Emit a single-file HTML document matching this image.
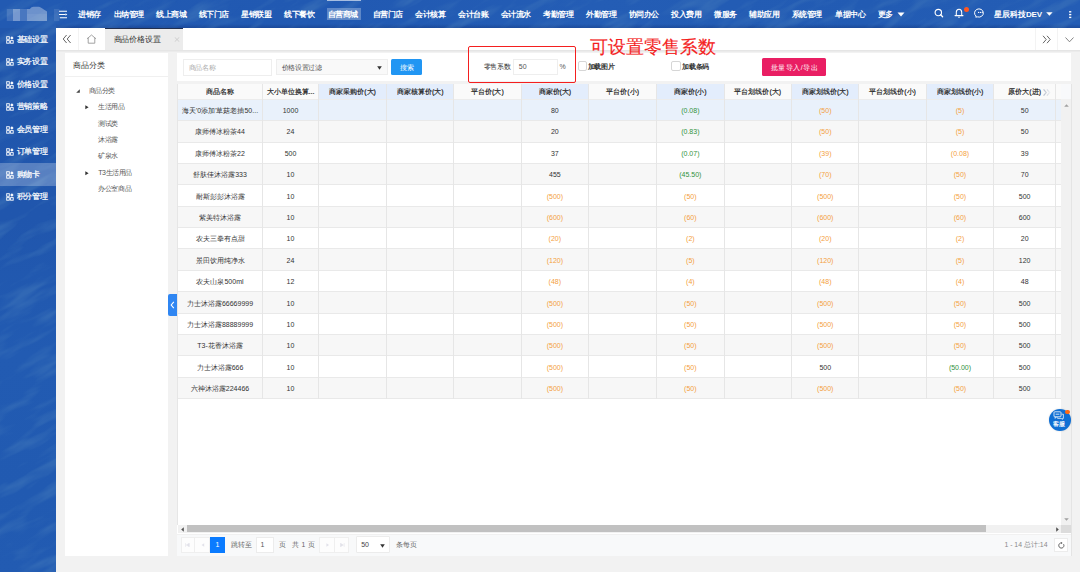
<!DOCTYPE html><html><head><meta charset="utf-8"><style>
*{margin:0;padding:0;box-sizing:border-box}
html,body{width:1080px;height:572px;overflow:hidden;background:#f2f2f2;font-family:"Liberation Sans",sans-serif;position:relative}
.a{position:absolute;white-space:nowrap}
.nav{color:#fff;font-size:8px;font-weight:bold;top:9.6px;letter-spacing:-0.5px;line-height:10px}
.side{color:#fff;font-size:8px;left:16.6px;letter-spacing:-0.25px;line-height:10px;-webkit-text-stroke:0.2px #fff}
.th{font-size:7px;font-weight:normal;color:#222;-webkit-text-stroke:0.18px #222;text-align:center;top:86.7px;line-height:10px}
.td{font-size:7px;color:#333;text-align:center;line-height:10px}
.g{color:#32923c}.o{color:#f4a040}.d{color:#333}
.tree{font-size:7px;letter-spacing:-0.4px;color:#555;line-height:10px}
</style></head><body>

<div class="a" style="left:0;top:0;width:1080px;height:28px;background:linear-gradient(100deg,#225ab2 0%,#2159b2 30%,#245db5 55%,#225bb3 80%,#245db5 100%)"></div>
<div class="a" style="left:0;top:28px;width:56px;height:544px;background:linear-gradient(180deg,#2157ad,#2056ad 35%,#225bb2 60%,#215ab1 85%,#225bb2)"></div>
<div class="a" style="left:56px;top:24px;width:1024px;height:4px;background:linear-gradient(rgba(10,30,90,0),rgba(10,30,90,.28))"></div>
<svg class="a" style="left:0;top:0" width="1080" height="572"><defs><filter id="tx" x="-50%" y="-50%" width="200%" height="200%"><feTurbulence type="fractalNoise" baseFrequency="0.02 0.09" numOctaves="3" seed="11" result="n"/><feColorMatrix in="n" type="matrix" values="0 0 0 0 0.06  0 0 0 0 0.2  0 0 0 0 0.5  0 0 0 -3 1.6"/></filter><clipPath id="bc"><rect x="0" y="0" width="1080" height="28"/><rect x="0" y="28" width="56" height="544"/></clipPath></defs><g clip-path="url(#bc)"><rect x="-400" y="-400" width="1900" height="1400" filter="url(#tx)" opacity=".45" transform="rotate(-28 540 286)"/></g></svg>
<svg class="a" style="left:0;top:0" width="62" height="28" viewBox="0 0 62 28"><rect x="6.8" y="9" width="6.2" height="12" fill="#fff" fill-opacity=".14"/><rect x="13" y="9" width="7" height="12" fill="#fff" fill-opacity=".38"/><rect x="20" y="9" width="7" height="12" fill="#fff" fill-opacity=".18"/><path d="M27 9H29.8Q31.5 6.8 33.5 6.8H39Q41 7.5 47 11.5V21H27z" fill="#fff" fill-opacity=".34"/><rect x="27" y="14" width="20" height="7" fill="#fff" fill-opacity=".06"/><rect x="54" y="9" width="5.3" height="12" fill="#fff" fill-opacity=".1"/></svg>
<svg class="a" style="left:58px;top:10px" width="10" height="9" viewBox="0 0 10 9"><path d="M1 1.3H9M1 4.5H7.5M1.8 7.7H9" stroke="#fff" stroke-width="1.1"/><path d="M7.5 3.2L9.3 4.5 7.5 5.8z" fill="#fff"/></svg>
<div class="a" style="left:327.3px;top:8.1px;width:33.8px;height:11.8px;background:rgba(255,255,255,.28)"></div>
<div class="a" style="left:327.3px;top:0;width:33.8px;height:1px;background:rgba(255,255,255,.6)"></div>
<div class="a nav" style="left:78.4px">进销存</div>
<div class="a nav" style="left:113.7px">出纳管理</div>
<div class="a nav" style="left:156.39999999999998px">线上商城</div>
<div class="a nav" style="left:198.7px">线下门店</div>
<div class="a nav" style="left:241.39999999999998px">星销联盟</div>
<div class="a nav" style="left:284.4px">线下餐饮</div>
<div class="a nav" style="left:327.7px">自营商城</div>
<div class="a nav" style="left:372.7px">自营门店</div>
<div class="a nav" style="left:415.2px">会计核算</div>
<div class="a nav" style="left:458.0px">会计台账</div>
<div class="a nav" style="left:500.5px">会计流水</div>
<div class="a nav" style="left:543.0px">考勤管理</div>
<div class="a nav" style="left:586.0px">外勤管理</div>
<div class="a nav" style="left:628.9000000000001px">协同办公</div>
<div class="a nav" style="left:671.4000000000001px">投入费用</div>
<div class="a nav" style="left:714.4000000000001px">微服务</div>
<div class="a nav" style="left:749.4000000000001px">辅助应用</div>
<div class="a nav" style="left:791.9000000000001px">系统管理</div>
<div class="a nav" style="left:835.0px">单据中心</div>
<div class="a nav" style="left:877.5px">更多</div>
<svg class="a" style="left:897px;top:12px" width="8" height="5"><path d="M0.5 0.5H7.5L4 4.5z" fill="#fff"/></svg>
<svg class="a" style="left:933px;top:8px" width="11" height="10" viewBox="0 0 11 10"><circle cx="5.3" cy="4.5" r="3.2" stroke="#fff" stroke-width="1.15" fill="none"/><path d="M7.6 6.8L9.6 8.8" stroke="#fff" stroke-width="1.3" stroke-linecap="round"/></svg>
<svg class="a" style="left:954px;top:8px" width="10" height="10" viewBox="0 0 10 10"><path d="M2.3 7.2V4.3A2.7 3.1 0 0 1 7.7 4.3V7.2" stroke="#fff" stroke-width="1.05" fill="none"/><path d="M1 7.6H9" stroke="#fff" stroke-width="1.05" stroke-linecap="round"/><path d="M4.2 9.2H5.8" stroke="#fff" stroke-width="1"/></svg>
<div class="a" style="left:963.7px;top:6.9px;width:5.2px;height:5.2px;border-radius:50%;background:#ff5722"></div>
<svg class="a" style="left:973.5px;top:7px" width="12" height="11" viewBox="0 0 12 11"><path d="M2.2 9.2A4.4 4.1 0 1 1 3.6 9.9L1.6 10.1z" stroke="#fff" stroke-width="1" fill="none" stroke-linejoin="round"/><circle cx="4.6" cy="5.4" r=".65" fill="#fff"/><circle cx="6.4" cy="5.4" r=".65" fill="#fff"/><circle cx="8.2" cy="5.4" r=".65" fill="#fff"/></svg>
<div class="a nav" style="left:994.3px;letter-spacing:-0.1px">星辰科技DEV</div>
<svg class="a" style="left:1045.7px;top:11.8px" width="7" height="4"><path d="M0.2 0.2H6.6L3.4 3.8z" fill="#fff"/></svg>
<svg class="a" style="left:1068.8px;top:11px" width="3" height="8"><rect x=".1" y=".1" width="2.2" height="1.4" fill="#fff"/><rect x=".1" y="2.9" width="2.2" height="1.4" fill="#fff"/><rect x=".1" y="5.7" width="2.2" height="1.4" fill="#fff"/></svg>
<div class="a" style="left:0;top:163px;width:56px;height:22.5px;background:rgba(255,255,255,.25)"></div>
<svg class="a" style="left:5.5px;top:35.65px" width="8" height="8" viewBox="0 0 8 8"><rect x=".7" y=".7" width="2.6" height="2.6" fill="none" stroke="#fff" stroke-width=".9"/><rect x=".7" y="4.6" width="2.6" height="2.6" fill="none" stroke="#fff" stroke-width=".9"/><rect x="4.6" y="4.6" width="2.6" height="2.6" fill="none" stroke="#fff" stroke-width=".9"/><path d="M5.9 .3L7.6 2 5.9 3.7 4.2 2z" fill="#fff"/></svg>
<div class="a side" style="top:34.75px">基础设置</div>
<svg class="a" style="left:5.5px;top:58.15px" width="8" height="8" viewBox="0 0 8 8"><rect x=".7" y=".7" width="2.6" height="2.6" fill="none" stroke="#fff" stroke-width=".9"/><rect x=".7" y="4.6" width="2.6" height="2.6" fill="none" stroke="#fff" stroke-width=".9"/><rect x="4.6" y="4.6" width="2.6" height="2.6" fill="none" stroke="#fff" stroke-width=".9"/><path d="M5.9 .3L7.6 2 5.9 3.7 4.2 2z" fill="#fff"/></svg>
<div class="a side" style="top:57.25px">实务设置</div>
<svg class="a" style="left:5.5px;top:80.65px" width="8" height="8" viewBox="0 0 8 8"><rect x=".7" y=".7" width="2.6" height="2.6" fill="none" stroke="#fff" stroke-width=".9"/><rect x=".7" y="4.6" width="2.6" height="2.6" fill="none" stroke="#fff" stroke-width=".9"/><rect x="4.6" y="4.6" width="2.6" height="2.6" fill="none" stroke="#fff" stroke-width=".9"/><path d="M5.9 .3L7.6 2 5.9 3.7 4.2 2z" fill="#fff"/></svg>
<div class="a side" style="top:79.75px">价格设置</div>
<svg class="a" style="left:5.5px;top:103.15px" width="8" height="8" viewBox="0 0 8 8"><rect x=".7" y=".7" width="2.6" height="2.6" fill="none" stroke="#fff" stroke-width=".9"/><rect x=".7" y="4.6" width="2.6" height="2.6" fill="none" stroke="#fff" stroke-width=".9"/><rect x="4.6" y="4.6" width="2.6" height="2.6" fill="none" stroke="#fff" stroke-width=".9"/><path d="M5.9 .3L7.6 2 5.9 3.7 4.2 2z" fill="#fff"/></svg>
<div class="a side" style="top:102.25px">营销策略</div>
<svg class="a" style="left:5.5px;top:125.65px" width="8" height="8" viewBox="0 0 8 8"><rect x=".7" y=".7" width="2.6" height="2.6" fill="none" stroke="#fff" stroke-width=".9"/><rect x=".7" y="4.6" width="2.6" height="2.6" fill="none" stroke="#fff" stroke-width=".9"/><rect x="4.6" y="4.6" width="2.6" height="2.6" fill="none" stroke="#fff" stroke-width=".9"/><path d="M5.9 .3L7.6 2 5.9 3.7 4.2 2z" fill="#fff"/></svg>
<div class="a side" style="top:124.75px">会员管理</div>
<svg class="a" style="left:5.5px;top:148.15px" width="8" height="8" viewBox="0 0 8 8"><rect x=".7" y=".7" width="2.6" height="2.6" fill="none" stroke="#fff" stroke-width=".9"/><rect x=".7" y="4.6" width="2.6" height="2.6" fill="none" stroke="#fff" stroke-width=".9"/><rect x="4.6" y="4.6" width="2.6" height="2.6" fill="none" stroke="#fff" stroke-width=".9"/><path d="M5.9 .3L7.6 2 5.9 3.7 4.2 2z" fill="#fff"/></svg>
<div class="a side" style="top:147.25px">订单管理</div>
<svg class="a" style="left:5.5px;top:170.65px" width="8" height="8" viewBox="0 0 8 8"><rect x=".7" y=".7" width="2.6" height="2.6" fill="none" stroke="#fff" stroke-width=".9"/><rect x=".7" y="4.6" width="2.6" height="2.6" fill="none" stroke="#fff" stroke-width=".9"/><rect x="4.6" y="4.6" width="2.6" height="2.6" fill="none" stroke="#fff" stroke-width=".9"/><path d="M5.9 .3L7.6 2 5.9 3.7 4.2 2z" fill="#fff"/></svg>
<div class="a side" style="top:169.75px">购物卡</div>
<svg class="a" style="left:5.5px;top:193.15px" width="8" height="8" viewBox="0 0 8 8"><rect x=".7" y=".7" width="2.6" height="2.6" fill="none" stroke="#fff" stroke-width=".9"/><rect x=".7" y="4.6" width="2.6" height="2.6" fill="none" stroke="#fff" stroke-width=".9"/><rect x="4.6" y="4.6" width="2.6" height="2.6" fill="none" stroke="#fff" stroke-width=".9"/><path d="M5.9 .3L7.6 2 5.9 3.7 4.2 2z" fill="#fff"/></svg>
<div class="a side" style="top:192.25px">积分管理</div>
<div class="a" style="left:56px;top:28px;width:1024px;height:22px;background:#fff"></div>
<div class="a" style="left:56px;top:50px;width:1024px;height:2px;background:linear-gradient(#e2e2e2,#eeeeee)"></div>
<div class="a" style="left:78.3px;top:28px;width:1px;height:22px;background:#f3f3f3"></div>
<div class="a" style="left:1035.2px;top:28px;width:1px;height:22px;background:#f3f3f3"></div>
<div class="a" style="left:1057.4px;top:28px;width:1px;height:22px;background:#f3f3f3"></div>
<svg class="a" style="left:62px;top:34px" width="10" height="10" viewBox="0 0 10 10"><path d="M4.6 1L1.2 5 4.6 9M8.6 1L5.2 5 8.6 9" stroke="#666" stroke-width="1" fill="none"/></svg>
<svg class="a" style="left:86px;top:34px" width="11" height="10" viewBox="0 0 11 10"><path d="M1 4.8L5.5 1 10 4.8M2.2 3.8V9.2H8.8V3.8" stroke="#999" stroke-width=".9" fill="none"/></svg>
<div class="a" style="left:105.2px;top:28px;width:78px;height:22px;background:#ececec;border-top:1px solid #23304f"></div>
<div class="a" style="left:113.6px;top:34.6px;font-size:8px;letter-spacing:-0.2px;color:#333;line-height:10px">商品价格设置</div>
<svg class="a" style="left:173.5px;top:37.3px" width="6" height="5" viewBox="0 0 6 5"><path d="M.7 .3L5.3 4.7M5.3 .3L.7 4.7" stroke="#c8c8c8" stroke-width=".8"/></svg>
<svg class="a" style="left:1042px;top:35px" width="10" height="9" viewBox="0 0 10 9"><path d="M1 .8L4.2 4.5 1 8.2M5 .8L8.2 4.5 5 8.2" stroke="#666" stroke-width="1" fill="none"/></svg>
<svg class="a" style="left:1064.5px;top:36.5px" width="9" height="6" viewBox="0 0 9 6"><path d="M.5 .5L4.5 4.8 8.5 .5" stroke="#777" stroke-width=".9" fill="none"/></svg>
<div class="a" style="left:64.7px;top:53.1px;width:103.3px;height:502.9px;background:#fff"></div>
<div class="a" style="left:64.7px;top:76px;width:103.3px;height:1px;background:#f0f0f0"></div>
<div class="a" style="left:73px;top:61px;font-size:7.8px;color:#333;line-height:10px">商品分类</div>
<svg class="a" style="left:76px;top:88.5px" width="4" height="4"><path d="M3.8 .2V3.8H.2z" fill="#444"/></svg>
<div class="a tree" style="left:88.7px;top:85.9px">商品分类</div>
<svg class="a" style="left:85px;top:105.0px" width="4" height="5"><path d="M.3 .3L3.6 2.3.3 4.3z" fill="#333"/></svg>
<div class="a tree" style="left:98.2px;top:102.2px">生活用品</div>
<div class="a tree" style="left:98.2px;top:118.63px">测试类</div>
<div class="a tree" style="left:98.2px;top:135.06px">沐浴露</div>
<div class="a tree" style="left:98.2px;top:151.49px">矿泉水</div>
<svg class="a" style="left:85px;top:170.72000000000003px" width="4" height="5"><path d="M.3 .3L3.6 2.3.3 4.3z" fill="#333"/></svg>
<div class="a tree" style="left:98.2px;top:167.92000000000002px">T3生活用品</div>
<div class="a tree" style="left:98.2px;top:184.35000000000002px">办公室商品</div>
<div class="a" style="left:168px;top:293.6px;width:9.2px;height:22.4px;background:#2f86f2;border-radius:2px 0 0 2px"></div>
<svg class="a" style="left:170px;top:301px" width="5" height="8" viewBox="0 0 5 8"><path d="M3.8 .8L1.2 4 3.8 7.2" stroke="#fff" stroke-width="1.1" fill="none"/></svg>
<div class="a" style="left:177px;top:53.1px;width:894px;height:28px;background:#fff"></div>
<div class="a" style="left:177.2px;top:84.2px;width:894px;height:471.8px;background:#fff"></div>
<div class="a" style="left:183.1px;top:59.4px;width:89.3px;height:16.2px;border:1px solid #eeeeee;background:#fff"></div>
<div class="a" style="left:188.8px;top:62.5px;font-size:7px;letter-spacing:-0.4px;color:#aaa;line-height:10px">商品名称</div>
<div class="a" style="left:275.6px;top:59.2px;width:112.2px;height:16.3px;border:1px solid #eeeeee;background:#f9f9f9"></div>
<div class="a" style="left:281.5px;top:63.4px;font-size:7px;letter-spacing:-0.3px;color:#555;line-height:10px">价格设置过滤</div>
<svg class="a" style="left:377px;top:66px" width="5" height="4"><path d="M.2 .2H4.8L2.5 3.8z" fill="#333"/></svg>
<div class="a" style="left:391.2px;top:58.6px;width:31.1px;height:16.9px;background:#2196f3;border-radius:1.5px"></div>
<div class="a" style="left:399.5px;top:63.2px;font-size:7.4px;color:#fff;line-height:10px">搜索</div>
<div class="a" style="left:483.6px;top:62.2px;font-size:7px;letter-spacing:-0.2px;color:#333;line-height:10px">零售系数</div>
<div class="a" style="left:513.3px;top:59.4px;width:44.5px;height:15.9px;border:1px solid #eeeeee;background:#fff"></div>
<div class="a" style="left:518.8px;top:62.2px;font-size:7px;color:#555;line-height:10px">50</div>
<div class="a" style="left:559.5px;top:62.2px;font-size:7px;color:#555;line-height:10px">%</div>
<div class="a" style="left:577.6px;top:61.2px;width:9px;height:10px;border:1px solid #d6d6d6;border-radius:2px;background:#fff"></div>
<div class="a" style="left:587.6px;top:62px;font-size:7px;letter-spacing:-0.3px;color:#333;line-height:10px;font-weight:bold">加载图片</div>
<div class="a" style="left:671.3px;top:61px;width:9.3px;height:9.7px;border:1px solid #d6d6d6;border-radius:2px;background:#fff"></div>
<div class="a" style="left:682.2px;top:61.8px;font-size:7px;letter-spacing:-0.3px;color:#333;line-height:10px;font-weight:bold">加载条码</div>
<div class="a" style="left:762.2px;top:58.3px;width:63.9px;height:17.5px;background:#e91e63;border-radius:1.5px"></div>
<div class="a" style="left:770.8px;top:62.8px;font-size:7px;letter-spacing:0.5px;color:#fff;line-height:10px">批量导入/导出</div>
<div class="a" style="left:177.5px;top:84.2px;width:884px;height:15px;background:#fafafa"></div>
<div class="a" style="left:318.5px;top:84.2px;width:68.19999999999999px;height:15px;background:#e3edfc"></div>
<div class="a" style="left:386.7px;top:84.2px;width:67.10000000000002px;height:15px;background:#e3edfc"></div>
<div class="a" style="left:521.1px;top:84.2px;width:67.5px;height:15px;background:#e3edfc"></div>
<div class="a" style="left:656.7px;top:84.2px;width:67.29999999999995px;height:15px;background:#e3edfc"></div>
<div class="a" style="left:791.6px;top:84.2px;width:67.29999999999995px;height:15px;background:#e3edfc"></div>
<div class="a" style="left:926.2px;top:84.2px;width:67.59999999999991px;height:15px;background:#e3edfc"></div>
<div class="a" style="left:177.5px;top:99.20px;width:884px;height:21.4px;background:#e9f1fb"></div>
<div class="a" style="left:177.5px;top:120.60px;width:884px;height:21.4px;background:#f7f7f7"></div>
<div class="a" style="left:177.5px;top:142.00px;width:884px;height:21.4px;background:#fff"></div>
<div class="a" style="left:177.5px;top:163.40px;width:884px;height:21.4px;background:#f7f7f7"></div>
<div class="a" style="left:177.5px;top:184.80px;width:884px;height:21.4px;background:#fff"></div>
<div class="a" style="left:177.5px;top:206.20px;width:884px;height:21.4px;background:#f7f7f7"></div>
<div class="a" style="left:177.5px;top:227.60px;width:884px;height:21.4px;background:#fff"></div>
<div class="a" style="left:177.5px;top:249.00px;width:884px;height:21.4px;background:#f7f7f7"></div>
<div class="a" style="left:177.5px;top:270.40px;width:884px;height:21.4px;background:#fff"></div>
<div class="a" style="left:177.5px;top:291.80px;width:884px;height:21.4px;background:#f7f7f7"></div>
<div class="a" style="left:177.5px;top:313.20px;width:884px;height:21.4px;background:#fff"></div>
<div class="a" style="left:177.5px;top:334.60px;width:884px;height:21.4px;background:#f7f7f7"></div>
<div class="a" style="left:177.5px;top:356.00px;width:884px;height:21.4px;background:#fff"></div>
<div class="a" style="left:177.5px;top:377.40px;width:884px;height:21.4px;background:#f7f7f7"></div>
<div class="a" style="left:177.5px;top:120px;width:884px;height:1px;background:#e9e9e9"></div>
<div class="a" style="left:177.5px;top:142px;width:884px;height:1px;background:#e9e9e9"></div>
<div class="a" style="left:177.5px;top:163px;width:884px;height:1px;background:#e9e9e9"></div>
<div class="a" style="left:177.5px;top:184px;width:884px;height:1px;background:#e9e9e9"></div>
<div class="a" style="left:177.5px;top:206px;width:884px;height:1px;background:#e9e9e9"></div>
<div class="a" style="left:177.5px;top:227px;width:884px;height:1px;background:#e9e9e9"></div>
<div class="a" style="left:177.5px;top:248px;width:884px;height:1px;background:#e9e9e9"></div>
<div class="a" style="left:177.5px;top:270px;width:884px;height:1px;background:#e9e9e9"></div>
<div class="a" style="left:177.5px;top:291px;width:884px;height:1px;background:#e9e9e9"></div>
<div class="a" style="left:177.5px;top:313px;width:884px;height:1px;background:#e9e9e9"></div>
<div class="a" style="left:177.5px;top:334px;width:884px;height:1px;background:#e9e9e9"></div>
<div class="a" style="left:177.5px;top:355px;width:884px;height:1px;background:#e9e9e9"></div>
<div class="a" style="left:177.5px;top:377px;width:884px;height:1px;background:#e9e9e9"></div>
<div class="a" style="left:177.5px;top:398px;width:884px;height:1px;background:#e9e9e9"></div>
<div class="a" style="left:177.5px;top:98.7px;width:884px;height:1px;background:#ececec"></div>
<div class="a" style="left:262.0px;top:84.2px;width:1px;height:314.60px;background:#e6e6e6"></div>
<div class="a" style="left:318.0px;top:84.2px;width:1px;height:314.60px;background:#e6e6e6"></div>
<div class="a" style="left:386.2px;top:84.2px;width:1px;height:314.60px;background:#e6e6e6"></div>
<div class="a" style="left:453.3px;top:84.2px;width:1px;height:314.60px;background:#e6e6e6"></div>
<div class="a" style="left:520.6px;top:84.2px;width:1px;height:314.60px;background:#e6e6e6"></div>
<div class="a" style="left:588.1px;top:84.2px;width:1px;height:314.60px;background:#e6e6e6"></div>
<div class="a" style="left:656.2px;top:84.2px;width:1px;height:314.60px;background:#e6e6e6"></div>
<div class="a" style="left:723.5px;top:84.2px;width:1px;height:314.60px;background:#e6e6e6"></div>
<div class="a" style="left:791.1px;top:84.2px;width:1px;height:314.60px;background:#e6e6e6"></div>
<div class="a" style="left:858.4px;top:84.2px;width:1px;height:314.60px;background:#e6e6e6"></div>
<div class="a" style="left:925.7px;top:84.2px;width:1px;height:314.60px;background:#e6e6e6"></div>
<div class="a" style="left:993.3px;top:84.2px;width:1px;height:314.60px;background:#e6e6e6"></div>
<div class="a" style="left:1055.0px;top:84.2px;width:1px;height:314.60px;background:#e6e6e6"></div>
<div class="a th" style="left:177.5px;width:85.0px">商品名称</div>
<div class="a th" style="left:262.5px;width:56.0px">大小单位换算...</div>
<div class="a th" style="left:318.5px;width:68.19999999999999px">商家采购价(大)</div>
<div class="a th" style="left:386.7px;width:67.10000000000002px">商家核算价(大)</div>
<div class="a th" style="left:453.8px;width:67.30000000000001px">平台价(大)</div>
<div class="a th" style="left:521.1px;width:67.5px">商家价(大)</div>
<div class="a th" style="left:588.6px;width:68.10000000000002px">平台价(小)</div>
<div class="a th" style="left:656.7px;width:67.29999999999995px">商家价(小)</div>
<div class="a th" style="left:724px;width:67.60000000000002px">平台划线价(大)</div>
<div class="a th" style="left:791.6px;width:67.29999999999995px">商家划线价(大)</div>
<div class="a th" style="left:858.9px;width:67.30000000000007px">平台划线价(小)</div>
<div class="a th" style="left:926.2px;width:67.59999999999991px">商家划线价(小)</div>
<div class="a th" style="left:993.8px;width:61.700000000000045px">原价大(进)</div>
<svg class="a" style="left:1043px;top:89px" width="8" height="7" viewBox="0 0 8 7"><defs><linearGradient id="fd" x1="0" x2="1"><stop offset="0" stop-color="#b8bfcc"/><stop offset="1" stop-color="#eceef2"/></linearGradient></defs><path d="M.6 .4L3.3 3.5 .6 6.6M4 .4L6.7 3.5 4 6.6" stroke="url(#fd)" stroke-width="1.2" fill="none"/></svg>
<div class="a td d" style="left:177.5px;width:85.0px;top:105.90px">海天'0添加'草菇老抽50...</div>
<div class="a td d" style="left:262.5px;width:56.0px;top:105.90px">1000</div>
<div class="a td d" style="left:521.1px;width:67.5px;top:105.90px">80</div>
<div class="a td g" style="left:656.7px;width:67.29999999999995px;top:105.90px">(0.08)</div>
<div class="a td o" style="left:791.6px;width:67.29999999999995px;top:105.90px">(50)</div>
<div class="a td o" style="left:926.2px;width:67.59999999999991px;top:105.90px">(5)</div>
<div class="a td d" style="left:993.8px;width:61.700000000000045px;top:105.90px">50</div>
<div class="a td d" style="left:177.5px;width:85.0px;top:127.30px">康师傅冰粉茶44</div>
<div class="a td d" style="left:262.5px;width:56.0px;top:127.30px">24</div>
<div class="a td d" style="left:521.1px;width:67.5px;top:127.30px">20</div>
<div class="a td g" style="left:656.7px;width:67.29999999999995px;top:127.30px">(0.83)</div>
<div class="a td o" style="left:791.6px;width:67.29999999999995px;top:127.30px">(50)</div>
<div class="a td o" style="left:926.2px;width:67.59999999999991px;top:127.30px">(5)</div>
<div class="a td d" style="left:993.8px;width:61.700000000000045px;top:127.30px">50</div>
<div class="a td d" style="left:177.5px;width:85.0px;top:148.70px">康师傅冰粉茶22</div>
<div class="a td d" style="left:262.5px;width:56.0px;top:148.70px">500</div>
<div class="a td d" style="left:521.1px;width:67.5px;top:148.70px">37</div>
<div class="a td g" style="left:656.7px;width:67.29999999999995px;top:148.70px">(0.07)</div>
<div class="a td o" style="left:791.6px;width:67.29999999999995px;top:148.70px">(39)</div>
<div class="a td o" style="left:926.2px;width:67.59999999999991px;top:148.70px">(0.08)</div>
<div class="a td d" style="left:993.8px;width:61.700000000000045px;top:148.70px">39</div>
<div class="a td d" style="left:177.5px;width:85.0px;top:170.10px">舒肤佳沐浴露333</div>
<div class="a td d" style="left:262.5px;width:56.0px;top:170.10px">10</div>
<div class="a td d" style="left:521.1px;width:67.5px;top:170.10px">455</div>
<div class="a td g" style="left:656.7px;width:67.29999999999995px;top:170.10px">(45.50)</div>
<div class="a td o" style="left:791.6px;width:67.29999999999995px;top:170.10px">(70)</div>
<div class="a td o" style="left:926.2px;width:67.59999999999991px;top:170.10px">(50)</div>
<div class="a td d" style="left:993.8px;width:61.700000000000045px;top:170.10px">70</div>
<div class="a td d" style="left:177.5px;width:85.0px;top:191.50px">耐斯彭彭沐浴露</div>
<div class="a td d" style="left:262.5px;width:56.0px;top:191.50px">10</div>
<div class="a td o" style="left:521.1px;width:67.5px;top:191.50px">(500)</div>
<div class="a td o" style="left:656.7px;width:67.29999999999995px;top:191.50px">(50)</div>
<div class="a td o" style="left:791.6px;width:67.29999999999995px;top:191.50px">(500)</div>
<div class="a td o" style="left:926.2px;width:67.59999999999991px;top:191.50px">(50)</div>
<div class="a td d" style="left:993.8px;width:61.700000000000045px;top:191.50px">500</div>
<div class="a td d" style="left:177.5px;width:85.0px;top:212.90px">紫美特沐浴露</div>
<div class="a td d" style="left:262.5px;width:56.0px;top:212.90px">10</div>
<div class="a td o" style="left:521.1px;width:67.5px;top:212.90px">(600)</div>
<div class="a td o" style="left:656.7px;width:67.29999999999995px;top:212.90px">(60)</div>
<div class="a td o" style="left:791.6px;width:67.29999999999995px;top:212.90px">(600)</div>
<div class="a td o" style="left:926.2px;width:67.59999999999991px;top:212.90px">(60)</div>
<div class="a td d" style="left:993.8px;width:61.700000000000045px;top:212.90px">600</div>
<div class="a td d" style="left:177.5px;width:85.0px;top:234.30px">农夫三拳有点甜</div>
<div class="a td d" style="left:262.5px;width:56.0px;top:234.30px">10</div>
<div class="a td o" style="left:521.1px;width:67.5px;top:234.30px">(20)</div>
<div class="a td o" style="left:656.7px;width:67.29999999999995px;top:234.30px">(2)</div>
<div class="a td o" style="left:791.6px;width:67.29999999999995px;top:234.30px">(20)</div>
<div class="a td o" style="left:926.2px;width:67.59999999999991px;top:234.30px">(2)</div>
<div class="a td d" style="left:993.8px;width:61.700000000000045px;top:234.30px">20</div>
<div class="a td d" style="left:177.5px;width:85.0px;top:255.70px">景田饮用纯净水</div>
<div class="a td d" style="left:262.5px;width:56.0px;top:255.70px">24</div>
<div class="a td o" style="left:521.1px;width:67.5px;top:255.70px">(120)</div>
<div class="a td o" style="left:656.7px;width:67.29999999999995px;top:255.70px">(5)</div>
<div class="a td o" style="left:791.6px;width:67.29999999999995px;top:255.70px">(120)</div>
<div class="a td o" style="left:926.2px;width:67.59999999999991px;top:255.70px">(5)</div>
<div class="a td d" style="left:993.8px;width:61.700000000000045px;top:255.70px">120</div>
<div class="a td d" style="left:177.5px;width:85.0px;top:277.10px">农夫山泉500ml</div>
<div class="a td d" style="left:262.5px;width:56.0px;top:277.10px">12</div>
<div class="a td o" style="left:521.1px;width:67.5px;top:277.10px">(48)</div>
<div class="a td o" style="left:656.7px;width:67.29999999999995px;top:277.10px">(4)</div>
<div class="a td o" style="left:791.6px;width:67.29999999999995px;top:277.10px">(48)</div>
<div class="a td o" style="left:926.2px;width:67.59999999999991px;top:277.10px">(4)</div>
<div class="a td d" style="left:993.8px;width:61.700000000000045px;top:277.10px">48</div>
<div class="a td d" style="left:177.5px;width:85.0px;top:298.50px">力士沐浴露66669999</div>
<div class="a td d" style="left:262.5px;width:56.0px;top:298.50px">10</div>
<div class="a td o" style="left:521.1px;width:67.5px;top:298.50px">(500)</div>
<div class="a td o" style="left:656.7px;width:67.29999999999995px;top:298.50px">(50)</div>
<div class="a td o" style="left:791.6px;width:67.29999999999995px;top:298.50px">(500)</div>
<div class="a td o" style="left:926.2px;width:67.59999999999991px;top:298.50px">(50)</div>
<div class="a td d" style="left:993.8px;width:61.700000000000045px;top:298.50px">500</div>
<div class="a td d" style="left:177.5px;width:85.0px;top:319.90px">力士沐浴露88889999</div>
<div class="a td d" style="left:262.5px;width:56.0px;top:319.90px">10</div>
<div class="a td o" style="left:521.1px;width:67.5px;top:319.90px">(500)</div>
<div class="a td o" style="left:656.7px;width:67.29999999999995px;top:319.90px">(50)</div>
<div class="a td o" style="left:791.6px;width:67.29999999999995px;top:319.90px">(500)</div>
<div class="a td o" style="left:926.2px;width:67.59999999999991px;top:319.90px">(50)</div>
<div class="a td d" style="left:993.8px;width:61.700000000000045px;top:319.90px">500</div>
<div class="a td d" style="left:177.5px;width:85.0px;top:341.30px">T3-花香沐浴露</div>
<div class="a td d" style="left:262.5px;width:56.0px;top:341.30px">10</div>
<div class="a td o" style="left:521.1px;width:67.5px;top:341.30px">(500)</div>
<div class="a td o" style="left:656.7px;width:67.29999999999995px;top:341.30px">(50)</div>
<div class="a td o" style="left:791.6px;width:67.29999999999995px;top:341.30px">(500)</div>
<div class="a td o" style="left:926.2px;width:67.59999999999991px;top:341.30px">(50)</div>
<div class="a td d" style="left:993.8px;width:61.700000000000045px;top:341.30px">500</div>
<div class="a td d" style="left:177.5px;width:85.0px;top:362.70px">力士沐浴露666</div>
<div class="a td d" style="left:262.5px;width:56.0px;top:362.70px">10</div>
<div class="a td o" style="left:521.1px;width:67.5px;top:362.70px">(500)</div>
<div class="a td o" style="left:656.7px;width:67.29999999999995px;top:362.70px">(50)</div>
<div class="a td d" style="left:791.6px;width:67.29999999999995px;top:362.70px">500</div>
<div class="a td g" style="left:926.2px;width:67.59999999999991px;top:362.70px">(50.00)</div>
<div class="a td d" style="left:993.8px;width:61.700000000000045px;top:362.70px">500</div>
<div class="a td d" style="left:177.5px;width:85.0px;top:384.10px">六神沐浴露224466</div>
<div class="a td d" style="left:262.5px;width:56.0px;top:384.10px">10</div>
<div class="a td o" style="left:521.1px;width:67.5px;top:384.10px">(500)</div>
<div class="a td o" style="left:656.7px;width:67.29999999999995px;top:384.10px">(50)</div>
<div class="a td o" style="left:791.6px;width:67.29999999999995px;top:384.10px">(500)</div>
<div class="a td o" style="left:926.2px;width:67.59999999999991px;top:384.10px">(50)</div>
<div class="a td d" style="left:993.8px;width:61.700000000000045px;top:384.10px">500</div>
<div class="a" style="left:177.2px;top:84.2px;width:1px;height:440.60px;background:#e6e6e6"></div>
<div class="a" style="left:1071px;top:84.2px;width:0.8px;height:471.80px;background:#e4e4e4"></div>
<div class="a" style="left:1061.4px;top:99.2px;width:9.9px;height:425.59999999999997px;background:#f1f1f1"></div>
<div class="a" style="left:1061.4px;top:84.2px;width:9.9px;height:15px;background:#f8f9fb"></div>
<svg class="a" style="left:1064px;top:103.5px" width="5" height="3"><path d="M.2 2.8L2.5 .2 4.8 2.8z" fill="#a0a0a0"/></svg>
<svg class="a" style="left:1064px;top:517.5px" width="5" height="3"><path d="M.2 .2L2.5 2.8 4.8 .2z" fill="#a0a0a0"/></svg>
<div class="a" style="left:177.5px;top:524.8px;width:884px;height:8.6px;background:#f1f1f1"></div>
<div class="a" style="left:187px;top:525.2px;width:798.8px;height:7.1px;background:#c1c1c1"></div>
<svg class="a" style="left:181px;top:527px" width="3" height="5"><path d="M2.8 .2V4.8L.2 2.5z" fill="#505050"/></svg>
<svg class="a" style="left:1056px;top:526.5px" width="3" height="5"><path d="M.2 .2V4.8L2.8 2.5z" fill="#505050"/></svg>
<div class="a" style="left:1061.4px;top:524.8px;width:9.9px;height:8.6px;background:#dcdcdc"></div>
<div class="a" style="left:177.2px;top:534px;width:894px;height:22px;background:#f8f9fa;border-top:1px solid #f1f1f1"></div>
<div class="a" style="left:180.6px;top:537.2px;width:29.1px;height:15.6px;border:1px solid #efefef;background:#fdfdfd"></div>
<div class="a" style="left:194.3px;top:537.2px;width:1px;height:15.6px;background:#efefef"></div>
<div class="a" style="left:209.7px;top:537.2px;width:15.3px;height:15.6px;background:#0a7bff"></div>
<div class="a" style="left:209.7px;top:540px;width:15.3px;text-align:center;font-size:7px;color:#fff;line-height:10px">1</div>
<svg class="a" style="left:185.2px;top:543px" width="5" height="4"><path d="M.5 .2V3.8M4.3 .3L1.4 2 4.3 3.7z" stroke="#e2e2ea" stroke-width=".6" fill="#e2e2ea"/></svg>
<svg class="a" style="left:201px;top:543px" width="4" height="4"><path d="M3.2 .3L.5 2 3.2 3.7z" fill="#e2e2ea"/></svg>
<div class="a" style="left:230.5px;top:540.3px;font-size:6.8px;color:#666;line-height:10px">跳转至</div>
<div class="a" style="left:255.6px;top:536.9px;width:18.5px;height:16.4px;border:1px solid #ececec;background:#fff"></div>
<div class="a" style="left:260.6px;top:540.3px;font-size:7px;color:#555;line-height:10px">1</div>
<div class="a" style="left:278.8px;top:540.3px;font-size:6.8px;color:#666;line-height:10px">页</div>
<div class="a" style="left:291.6px;top:540.3px;font-size:6.8px;color:#666;line-height:10px;word-spacing:1px">共 1 页</div>
<div class="a" style="left:319.2px;top:537.2px;width:29.7px;height:15.6px;border:1px solid #efefef;background:#fdfdfd"></div>
<div class="a" style="left:334.1px;top:537.2px;width:1px;height:15.6px;background:#efefef"></div>
<svg class="a" style="left:325.7px;top:543px" width="4" height="4"><path d="M.4 .3L3.1 2 .4 3.7z" fill="#e2e2ea"/></svg>
<svg class="a" style="left:339.5px;top:543px" width="5" height="4"><path d="M4.2 .2V3.8M.4 .3L3.3 2 .4 3.7z" stroke="#e2e2ea" stroke-width=".6" fill="#e2e2ea"/></svg>
<div class="a" style="left:355.6px;top:536.4px;width:34.4px;height:16.9px;border:1px solid #ececec;background:#fff;border-radius:1px"></div>
<div class="a" style="left:361.2px;top:540.2px;font-size:7px;color:#444;line-height:10px">50</div>
<svg class="a" style="left:379.5px;top:543.5px" width="5" height="4"><path d="M.2 .2H4.8L2.5 3.8z" fill="#333"/></svg>
<div class="a" style="left:395.8px;top:540.3px;font-size:6.8px;color:#666;line-height:10px">条每页</div>
<div class="a" style="left:1004.4px;top:540.2px;font-size:6.9px;color:#8a8a8a;line-height:10px">1 - 14 总计:14</div>
<div class="a" style="left:1053.7px;top:537.9px;width:14.6px;height:14.6px;border:1px solid #ececec;background:#fff"></div>
<svg class="a" style="left:1058px;top:542px" width="7" height="7" viewBox="0 0 7 7"><path d="M5.6 2.2A2.6 2.6 0 1 1 3.5 .9" stroke="#555" stroke-width=".9" fill="none"/><path d="M3 .0L4.6 .9 3 1.9z" fill="#555"/></svg>
<div class="a" style="left:1048.6px;top:408.8px;width:22.4px;height:22.4px;border-radius:50%;background:#0f6fd4;box-shadow:0 0 2px rgba(0,0,0,.15)"></div>
<svg class="a" style="left:1053px;top:411px" width="12" height="9" viewBox="0 0 12 9"><rect x="1" y=".8" width="7" height="5" rx=".8" stroke="#fff" stroke-width=".8" fill="none"/><path d="M2.2 5.8V7.4L3.6 5.8" stroke="#fff" stroke-width=".7" fill="none"/><path d="M8.6 3.2H10.4V7.4H9.4V8.4L8.2 7.4H4.6V6.4" stroke="#fff" stroke-width=".7" fill="none"/><path d="M2.6 3.2H6.4" stroke="#fff" stroke-width=".8"/></svg>
<div class="a" style="left:1053px;top:419.5px;font-size:5.8px;color:#fff;font-weight:bold;line-height:8px">客服</div>
<div class="a" style="left:1065.4px;top:409.9px;width:4.6px;height:4.6px;border-radius:50%;background:#ff6a13"></div>
<div class="a" style="left:468.1px;top:46.1px;width:108.2px;height:36.6px;border:1.7px solid #f41f1f;border-radius:2px"></div>
<div class="a" style="left:590px;top:36.8px;font-size:17.8px;color:#f41f1f;line-height:20px;-webkit-text-stroke:0.15px #f41f1f">可设置零售系数</div>
</body></html>
